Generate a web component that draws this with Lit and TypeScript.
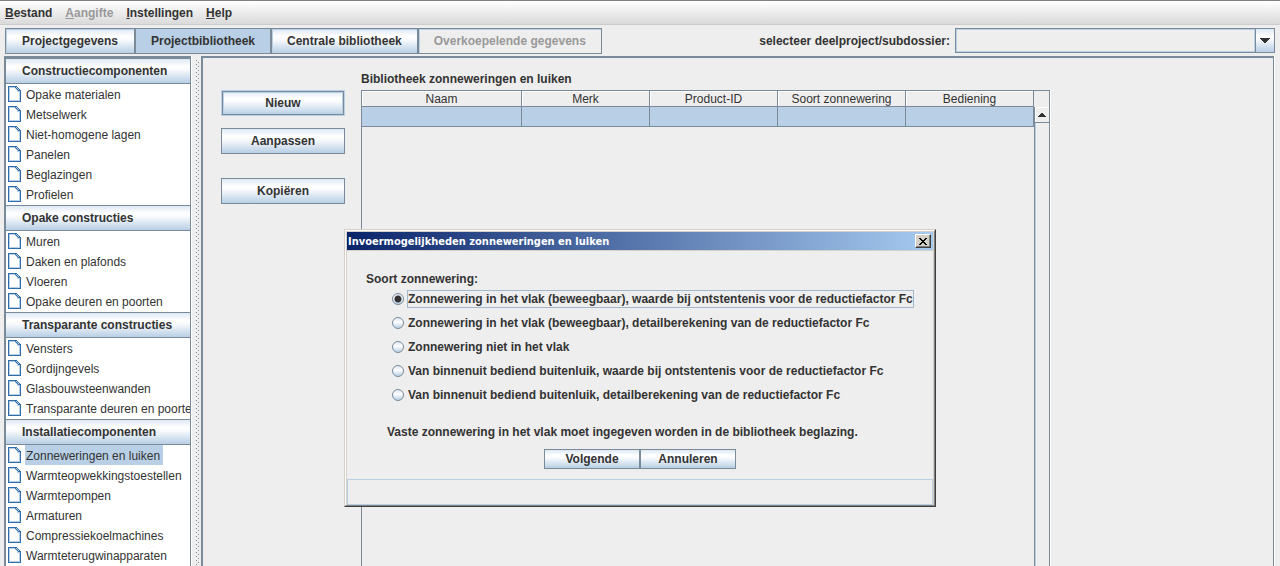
import { LitElement, html, css } from "lit";
import { customElement, state } from "lit/decorators.js";
import { classMap } from "lit/directives/class-map.js";

interface Group {
  title: string;
  items: string[];
}

const GROUPS: Group[] = [
  {
    title: "Constructiecomponenten",
    items: ["Opake materialen", "Metselwerk", "Niet-homogene lagen", "Panelen", "Beglazingen", "Profielen"],
  },
  {
    title: "Opake constructies",
    items: ["Muren", "Daken en plafonds", "Vloeren", "Opake deuren en poorten"],
  },
  {
    title: "Transparante constructies",
    items: ["Vensters", "Gordijngevels", "Glasbouwsteenwanden", "Transparante deuren en poorten"],
  },
  {
    title: "Installatiecomponenten",
    items: [
      "Zonneweringen en luiken",
      "Warmteopwekkingstoestellen",
      "Warmtepompen",
      "Armaturen",
      "Compressiekoelmachines",
      "Warmteterugwinapparaten",
    ],
  },
];

const MENUS = [
  { label: "Bestand", disabled: false },
  { label: "Aangifte", disabled: true },
  { label: "Instellingen", disabled: false },
  { label: "Help", disabled: false },
];

const TABS = [
  { label: "Projectgegevens", disabled: false },
  { label: "Projectbibliotheek", disabled: false },
  { label: "Centrale bibliotheek", disabled: false },
  { label: "Overkoepelende gegevens", disabled: true },
];

const COLUMNS = ["Naam", "Merk", "Product-ID", "Soort zonnewering", "Bediening"];

const SHADING_TYPES = [
  "Zonnewering in het vlak (beweegbaar), waarde bij ontstentenis voor de reductiefactor Fc",
  "Zonnewering in het vlak (beweegbaar), detailberekening van de reductiefactor Fc",
  "Zonnewering niet in het vlak",
  "Van binnenuit bediend buitenluik, waarde bij ontstentenis voor de reductiefactor Fc",
  "Van binnenuit bediend buitenluik, detailberekening van de reductiefactor Fc",
];

const controls = css`
  :host {
    --line: #7a8a99;
    --light: #b8cfe5;
    --face: #eeeeee;
    --ink: #333333;
    --steel: linear-gradient(#dde8f3 0%, #ffffff 30%, #f8fafd 45%, #b8cfe5 100%);
  }
  * {
    box-sizing: border-box;
  }
  button,
  select,
  input {
    font: inherit;
    color: inherit;
    margin: 0;
  }
  .push {
    border: 1px solid var(--line);
    background: var(--steel);
    padding: 0;
    border-radius: 0;
    font-weight: bold;
  }
`;

@customElement("library-tree")
export class LibraryTree extends LitElement {
  @state() private selected = "Zonneweringen en luiken";

  static styles = [
    controls,
    css`
      :host {
        display: block;
        background: #ffffff;
        border-left: 2px solid var(--line);
        border-right: 1px solid var(--line);
        box-shadow: 1px 0 #ffffff;
        overflow: hidden;
      }
      .head {
        display: flex;
        align-items: center;
        height: 26px;
        margin: 0;
        padding: 0 16px;
        font-size: 12px;
        font-weight: bold;
        background: var(--steel);
        border-top: 1px solid var(--line);
        border-bottom: 1px solid var(--line);
      }
      .list {
        list-style: none;
        margin: 0;
        padding: 0 0 1px;
      }
      .item {
        display: flex;
        align-items: center;
        gap: 4px;
        height: 20px;
        padding-left: 2px;
        color: var(--ink);
        text-decoration: none;
        white-space: nowrap;
      }
      .doc {
        flex: none;
        width: 13px;
        height: 16px;
      }
      .name {
        line-height: 18px;
        padding: 2px 3px 0 1px;
      }
      .chosen {
        background: var(--light);
      }
    `,
  ];

  private pick(e: Event, item: string) {
    e.preventDefault();
    this.selected = item;
  }

  render() {
    return GROUPS.map(
      (g) => html`
        <h2 class="head">${g.title}</h2>
        <ul class="list">
          ${g.items.map(
            (item) => html`<li>
              <a class="item" href="#" @click=${(e: Event) => this.pick(e, item)}>
                <svg class="doc" viewBox="0 0 13 16" shape-rendering="crispEdges" aria-hidden="true">
                  <path d="M0 0H9V1H10V2H11V3H12V4H13V16H0Z" fill="#2f6cab" />
                  <path d="M1 1H7V2H8V3H9V4H10V5H12V15H1Z" fill="#b8cfe5" />
                  <path d="M2 2H7V3H8V4H9V6H11V14H2Z" fill="#ffffff" />
                  <path d="M8 1H9V2H8ZM9 2H10V3H9ZM10 3H11V4H10Z" fill="#b8cfe5" />
                </svg>
                <span class=${classMap({ name: true, chosen: item === this.selected })}>${item}</span>
              </a>
            </li>`,
          )}
        </ul>
      `,
    );
  }
}

@customElement("shading-dialog")
export class ShadingDialog extends LitElement {
  @state() private choice = 0;

  static styles = [
    controls,
    css`
      :host {
        display: block;
        width: 592px;
        max-width: 100%;
        background: var(--face);
        border: 1px solid;
        border-color: #d4d0c8 #404040 #404040 #d4d0c8;
        font-weight: bold;
      }
      .frame {
        border: 1px solid;
        border-color: #ffffff #808080 #808080 #ffffff;
      }
      .inner {
        border: 1px solid #d4d0c8;
        border-bottom: 0;
      }
      .title {
        display: flex;
        align-items: center;
        justify-content: space-between;
        height: 18px;
        padding: 0 2px 0 1px;
        background: linear-gradient(90deg, #0a246a, #a6caf0);
        color: #ffffff;
        font: bold 11px "DejaVu Sans Condensed", "DejaVu Sans", sans-serif;
      }
      .caption {
        margin: 0;
        font: inherit;
        font-stretch: condensed;
        white-space: nowrap;
      }
      .close {
        display: grid;
        place-items: center;
        width: 16px;
        height: 14px;
        padding: 0;
        border: 1px solid;
        border-color: #ffffff #404040 #404040 #ffffff;
        background: #d4d0c8;
        box-shadow: inset -1px -1px #808080;
      }
      .body {
        border-top: 1px solid #d4d0c8;
        padding: 21px 0 10px 19px;
      }
      .group {
        margin: 0;
        padding: 0;
        border: 0;
      }
      .legend {
        padding: 0;
        line-height: 15px;
      }
      .option {
        display: flex;
        align-items: center;
        height: 24px;
        padding-left: 26px;
        gap: 4px;
      }
      .radio {
        appearance: none;
        flex: none;
        width: 12px;
        height: 12px;
        border: 1px solid var(--line);
        border-radius: 50%;
        background: linear-gradient(#dde8f3, #ffffff 40%, #b8cfe5);
        outline: none;
      }
      .radio:checked {
        background: radial-gradient(circle, #333333 3px, transparent 4px), linear-gradient(#dde8f3, #ffffff 40%, #b8cfe5);
      }
      .text {
        line-height: 16px;
        border: 1px solid transparent;
        border-left: 0;
        white-space: nowrap;
      }
      .radio:checked + .text {
        border-color: #a3b8cc;
        box-shadow: -1px 0 #a3b8cc;
      }
      .note {
        margin: 17px 0 9px 21px;
        line-height: 16px;
      }
      .actions {
        display: flex;
        justify-content: center;
        padding-right: 19px;
      }
      .action {
        width: 96px;
        height: 20px;
      }
      .status {
        height: 26px;
        border: 1px solid var(--light);
      }
    `,
  ];

  render() {
    return html`
      <div class="frame" role="dialog" aria-labelledby="caption">
        <div class="inner">
          <div class="title">
            <h2 class="caption" id="caption">Invoermogelijkheden zonneweringen en luiken</h2>
            <button class="close" type="button" aria-label="Sluiten">
              <svg width="8" height="7" viewBox="0 0 8 7" shape-rendering="crispEdges" aria-hidden="true">
                <path
                  d="M0 0H2V1H3V2H5V1H6V0H8V1H7V2H6V3H5V4H6V5H7V6H8V7H6V6H5V5H3V6H2V7H0V6H1V5H2V4H3V3H2V2H1V1H0Z"
                  fill="#000000"
                />
              </svg>
            </button>
          </div>
          <div class="body">
            <fieldset class="group">
              <legend class="legend">Soort zonnewering:</legend>
              ${SHADING_TYPES.map(
                (label, i) => html`<label class="option">
                  <input
                    class="radio"
                    type="radio"
                    name="soort"
                    .checked=${i === this.choice}
                    @change=${() => (this.choice = i)}
                  />
                  <span class="text">${label}</span>
                </label>`,
              )}
            </fieldset>
            <p class="note">Vaste zonnewering in het vlak moet ingegeven worden in de bibliotheek beglazing.</p>
            <div class="actions">
              <button class="push action" type="button">Volgende</button>
              <button class="push action" type="button">Annuleren</button>
            </div>
          </div>
          <div class="status" role="status"></div>
        </div>
      </div>
    `;
  }
}

@customElement("app-root")
export class AppRoot extends LitElement {
  @state() private tab = 1;

  static styles = [
    controls,
    css`
      :host {
        display: flex;
        flex-direction: column;
        position: relative;
        height: 100vh;
        overflow: hidden;
        background: var(--face);
        color: var(--ink);
        font: 12px "Liberation Sans", Arial, sans-serif;
      }
      .menubar {
        display: flex;
        align-items: center;
        gap: 13px;
        height: 25px;
        padding: 0 5px;
        border-top: 1px solid #84827e;
        border-bottom: 1px solid #cccccc;
        background: linear-gradient(#ffffff, #dadada);
      }
      .menu {
        border: 0;
        padding: 0;
        background: none;
        font-weight: bold;
      }
      .menu:disabled,
      .tab:disabled {
        color: #999999;
      }
      .toolbar {
        display: flex;
        align-items: flex-start;
        justify-content: space-between;
        padding: 3px 5px 2px;
      }
      .tabs {
        display: flex;
      }
      .tab {
        height: 26px;
        min-width: 130px;
        padding: 0 15px;
        box-shadow: inset 1px 1px var(--light);
      }
      .tab:disabled {
        background: var(--face);
      }
      .current {
        background: var(--light);
      }
      .project {
        display: flex;
        align-items: center;
        gap: 5px;
        font-weight: bold;
      }
      .combo {
        display: grid;
        grid-template-columns: 1fr 19px;
        width: 320px;
        height: 25px;
        border: 1px solid var(--line);
      }
      .select {
        grid-area: 1 / 1 / 2 / 3;
        appearance: none;
        border: 1px solid var(--light);
        border-radius: 0;
        background: var(--face);
        padding: 0 24px 0 4px;
      }
      .arrow {
        grid-area: 1 / 2;
        z-index: 1;
        display: grid;
        place-items: center;
        border-left: 1px solid var(--line);
        background: var(--steel);
        box-shadow: -1px 0 var(--light);
        pointer-events: none;
      }
      .work {
        flex: 1;
        min-height: 0;
        display: grid;
        grid-template-columns: 187px 10px 1fr;
        padding: 0 6px 0 4px;
      }
      .side {
        border-top: 2px solid var(--line);
      }
      .split {
        padding: 4px 2px 0 5px;
        overflow: hidden;
      }
      .dots {
        display: block;
        width: 3px;
        height: 100%;
      }
      .main {
        display: grid;
        grid-template-columns: 124px minmax(0, 689px);
        gap: 16px;
        padding: 13px 18px 0;
        border: 2px solid var(--line);
        border-right-width: 1px;
        border-bottom: 0;
        box-shadow: 1px 0 #ffffff;
      }
      .buttons {
        display: flex;
        flex-direction: column;
        gap: 12px;
        padding-top: 19px;
      }
      .command {
        height: 26px;
      }
      .focused {
        border-color: var(--light);
        box-shadow: inset 0 0 0 1px var(--line), inset 0 0 0 2px var(--light);
      }
      .apart {
        margin-top: 12px;
      }
      .library {
        display: flex;
        flex-direction: column;
        min-height: 0;
      }
      .heading {
        margin: 0;
        font-size: 12px;
        line-height: 16px;
        font-weight: bold;
      }
      .pane {
        flex: 1;
        display: grid;
        grid-template-columns: 1fr 15px;
        margin-top: 3px;
        border: 1px solid var(--line);
        border-bottom: 0;
        box-shadow: 1px 0 #ffffff;
      }
      .table {
        width: 100%;
        border-collapse: separate;
        border-spacing: 0;
        table-layout: fixed;
        align-self: start;
      }
      .th {
        height: 16px;
        padding: 1px 0 0;
        font-weight: normal;
        line-height: 14px;
        border-right: 1px solid var(--line);
        border-bottom: 1px solid var(--line);
        box-shadow: inset 1px 1px #ffffff;
      }
      .th:first-child {
        width: 160px;
      }
      .td {
        height: 20px;
        padding: 0;
        background: var(--light);
        border-right: 1px solid var(--line);
        border-bottom: 1px solid var(--line);
      }
      .scroll {
        margin-top: 16px;
        border-left: 1px solid var(--line);
        box-shadow: inset 1px 0 var(--light);
      }
      .up {
        display: grid;
        place-items: center;
        width: 100%;
        height: 16px;
        padding: 0;
        border: 0;
        border-bottom: 1px solid var(--line);
        background: var(--face);
        box-shadow: inset 1px 1px #ffffff;
      }
      .overlay {
        position: absolute;
        inset: 0;
        display: flex;
        justify-content: center;
        align-items: flex-start;
        padding-top: 229px;
      }
    `,
  ];

  render() {
    return html`
      <nav class="menubar">
        ${MENUS.map(
          (m) => html`<button class="menu" type="button" ?disabled=${m.disabled}><u>${m.label[0]}</u>${m.label.slice(1)}</button>`,
        )}
      </nav>
      <div class="toolbar">
        <div class="tabs">
          ${TABS.map(
            (t, i) => html`<button
              class=${classMap({ push: true, tab: true, current: i === this.tab })}
              type="button"
              ?disabled=${t.disabled}
              @click=${() => (this.tab = i)}
            >${t.label}</button>`,
          )}
        </div>
        <div class="project">
          <label for="project">selecteer deelproject/subdossier:</label>
          <div class="combo">
            <select class="select" id="project"></select>
            <span class="arrow">
              <svg width="10" height="5" viewBox="0 0 10 5" shape-rendering="crispEdges" aria-hidden="true">
                <path d="M0 0H10V1H9V2H8V3H7V4H6V5H4V4H3V3H2V2H1V1H0Z" fill="#333333" />
              </svg>
            </span>
          </div>
        </div>
      </div>
      <div class="work">
        <library-tree class="side"></library-tree>
        <div class="split">
          <svg class="dots" shape-rendering="crispEdges" aria-hidden="true">
            <defs>
              <pattern id="grip" width="4" height="4" patternUnits="userSpaceOnUse">
                <rect width="1" height="1" fill="#7a8a99" />
                <rect x="2" y="2" width="1" height="1" fill="#7a8a99" />
              </pattern>
            </defs>
            <rect width="100%" height="100%" fill="url(#grip)" />
          </svg>
        </div>
        <main class="main">
          <div class="buttons">
            <button class="push command focused" type="button">Nieuw</button>
            <button class="push command" type="button">Aanpassen</button>
            <button class="push command apart" type="button">Kopiëren</button>
          </div>
          <section class="library">
            <h1 class="heading">Bibliotheek zonneweringen en luiken</h1>
            <div class="pane">
              <table class="table">
                <thead>
                  <tr>${COLUMNS.map((c) => html`<th class="th" scope="col">${c}</th>`)}</tr>
                </thead>
                <tbody>
                  <tr>${COLUMNS.map(() => html`<td class="td"></td>`)}</tr>
                </tbody>
              </table>
              <div class="scroll">
                <button class="up" type="button" aria-label="Omhoog">
                  <svg width="8" height="4" viewBox="0 0 8 4" shape-rendering="crispEdges" aria-hidden="true">
                    <path d="M3 0H5V1H6V2H7V3H8V4H0V3H1V2H2V1H3Z" fill="#333333" />
                  </svg>
                </button>
              </div>
            </div>
          </section>
        </main>
      </div>
      <div class="overlay"><shading-dialog></shading-dialog></div>
    `;
  }
}
